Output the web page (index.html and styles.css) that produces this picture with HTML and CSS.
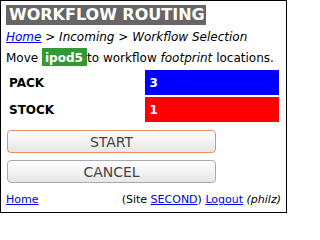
FILE: index.html
```html
<!DOCTYPE html>
<html>
<head>
<meta charset="utf-8">
<link rel="stylesheet" href="styles.css">
</head>
<body>
<div class="page">
  <div class="title-row"><span class="title">WORKFLOW ROUTING</span></div>
  <div class="crumb"><a href="#">Home</a> &gt; Incoming &gt; Workflow Selection</div>
  <div class="move">Move <span class="tag">ipod5 </span>to workflow <em>footprint</em> locations.</div>
  <table class="locs">
    <tr><td class="label">PACK</td><td class="val blue">3</td></tr>
    <tr><td class="label">STOCK</td><td class="val red">1</td></tr>
  </table>
  <div class="buttons">
    <button class="btn start">START</button>
    <button class="btn cancel">CANCEL</button>
  </div>
  <div class="footer">
    <a href="#">Home</a>
    <span>(Site <a href="#">SECOND</a>) <a href="#">Logout</a> <em>(philz)</em></span>
  </div>
</div>
</body>
</html>
```
FILE: styles.css
```css
html, body {
  margin: 0;
  padding: 0;
  background: #fff;
}
body {
  font-family: "DejaVu Sans", sans-serif;
  color: #000;
}
.page {
  box-sizing: border-box;
  width: 287px;
  height: 213px;
  border: 1px solid #000;
  padding: 4px 5px 5px 5px;
}
.title-row {
  height: 20px;
}
.title {
  display: inline-block;
  vertical-align: top;
  background: #666;
  color: #fff;
  font-weight: bold;
  font-size: 16px;
  line-height: 20px;
  padding: 0 1px 0 3px;
}
.crumb {
  margin-top: 5px;
  font-size: 12px;
  line-height: 14px;
  font-style: italic;
}
a {
  color: #00e;
  text-decoration: underline;
}
.move {
  margin-top: 7px;
  font-size: 12px;
  line-height: 14px;
  white-space: nowrap;
}
.tag {
  background: #393;
  color: #fff;
  font-weight: bold;
  padding: 3px 0 1px 3px;
  white-space: pre;
}
.locs {
  margin-top: 3px;
  width: 100%;
  border-spacing: 2px;
  table-layout: fixed;
  font-size: 12px;
  font-weight: bold;
}
.locs td {
  height: 25px;
  padding: 0;
  vertical-align: middle;
}
.label {
  padding-left: 1px !important;
}
.val {
  color: #fff;
  padding-left: 5px !important;
}
.blue { background: #00f; }
.red { background: #f00; }
.buttons {
  margin-top: 6px;
  display: flex;
  flex-direction: column;
  gap: 7px;
  align-items: flex-start;
}
.btn {
  margin-left: 1px;
  width: 209px;
  height: 23px;
  border-radius: 4px;
  font-family: "DejaVu Sans", sans-serif;
  font-size: 14px;
  color: #444;
  background: linear-gradient(#ffffff, #e6e6e6);
  padding: 0;
}
.start {
  border: 1px solid #f08a60;
}
.cancel {
  border: 1px solid #aaa;
}
.footer {
  margin-top: 10px;
  display: flex;
  justify-content: space-between;
  font-size: 11px;
  line-height: 13px;
}
```
